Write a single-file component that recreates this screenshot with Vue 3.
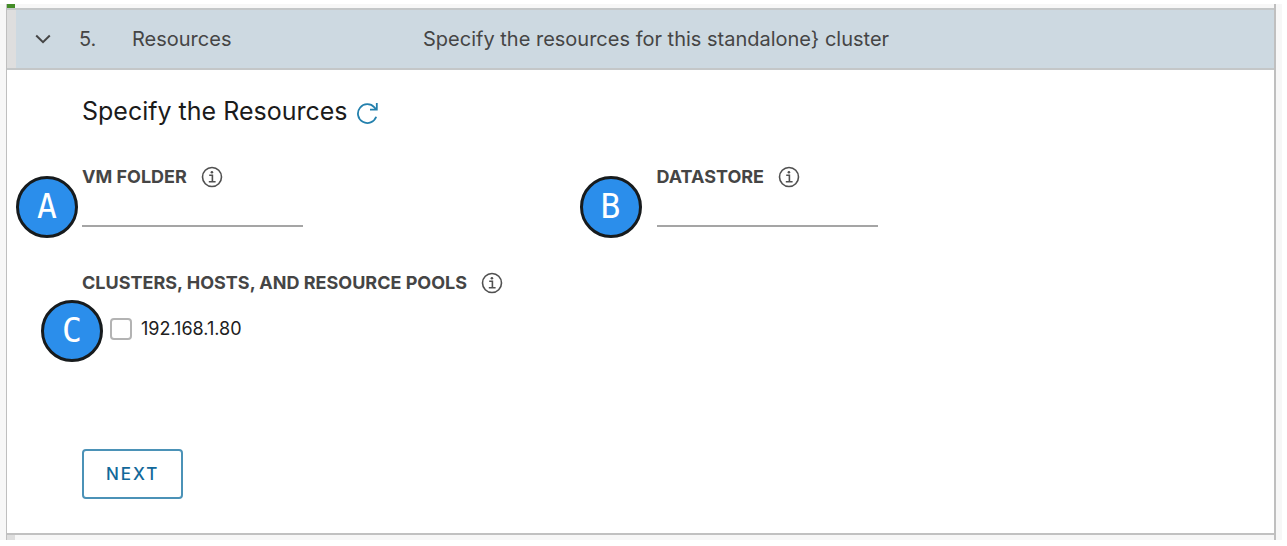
<script setup>
import { ref } from 'vue'

const folder = ref('')
const datastore = ref('')
const pools = ref([{ name: '192.168.1.80', checked: false }])
</script>

<template>
  <main class="page">
    <div class="stepper">
      <div class="previous"></div>

      <button class="step-header" type="button" aria-expanded="true">
        <svg class="chevron" viewBox="0 0 16 10" aria-hidden="true">
          <path d="M1.2 1.5 8 8.2 14.8 1.5" />
        </svg>
        <span class="number">5.</span>
        <span class="name">Resources</span>
        <span class="description">Specify the resources for this standalone} cluster</span>
      </button>

      <form class="step-body" @submit.prevent>
        <h1 class="title">
          Specify the Resources
          <button class="refresh" type="button" aria-label="Refresh">
            <svg viewBox="0 0 22 22" aria-hidden="true">
              <path d="M20.2 14.8A9.4 9.4 0 1 1 18.4 5.4L20 7.4" />
              <path d="M20.8 1V7.7H14" />
            </svg>
          </button>
        </h1>

        <div class="fields">
          <div class="field">
            <div class="label-row">
              <label for="folder">VM FOLDER</label>
              <svg class="info" viewBox="0 0 22 22" aria-hidden="true">
                <circle cx="11" cy="11" r="9.5" />
                <path d="M8.2 9.2H11.4V15.6M7.8 15.8H14.6" />
                <circle class="dot" cx="10.9" cy="6.2" r="1.3" />
              </svg>
            </div>
            <input id="folder" v-model="folder" class="text-input" type="text" />
            <span class="marker">A</span>
          </div>
          <div class="field">
            <div class="label-row">
              <label for="datastore">DATASTORE</label>
              <svg class="info" viewBox="0 0 22 22" aria-hidden="true">
                <circle cx="11" cy="11" r="9.5" />
                <path d="M8.2 9.2H11.4V15.6M7.8 15.8H14.6" />
                <circle class="dot" cx="10.9" cy="6.2" r="1.3" />
              </svg>
            </div>
            <input id="datastore" v-model="datastore" class="text-input" type="text" />
            <span class="marker wide">B</span>
          </div>
        </div>

        <div class="pools" role="group" aria-labelledby="pools-label">
          <div class="label-row">
            <span id="pools-label">CLUSTERS, HOSTS, AND RESOURCE POOLS</span>
            <svg class="info" viewBox="0 0 22 22" aria-hidden="true">
              <circle cx="11" cy="11" r="9.5" />
              <path d="M8.2 9.2H11.4V15.6M7.8 15.8H14.6" />
              <circle class="dot" cx="10.9" cy="6.2" r="1.3" />
            </svg>
          </div>
          <div v-for="pool in pools" :key="pool.name" class="pool">
            <input :id="pool.name" v-model="pool.checked" class="checkbox" type="checkbox" />
            <label :for="pool.name">{{ pool.name }}</label>
            <span class="marker pool-marker">C</span>
          </div>
        </div>

        <button class="next" type="submit">NEXT</button>
      </form>

      <div class="following"></div>
    </div>
  </main>
</template>

<style>
body {
  background: #fff;
}
</style>

<style scoped>
.page,
.page * {
  box-sizing: border-box;
}

.page {
  margin: 4px 5px 6px 0;
  padding: 0 6px;
  background: #f7f7f7;
  color: #454545;
  font-family: Inter, "Liberation Sans", sans-serif;
}

.stepper {
  border: solid #bfbfbf;
  border-width: 0 2px 0 1px;
}

.previous {
  height: 4px;
  border-left: 8px solid #438c27;
}

.step-header {
  display: flex;
  align-items: center;
  width: 100%;
  height: 62px;
  margin: 0;
  padding: 0 0 0 20px;
  border: solid #c4c7c8;
  border-width: 2px 0;
  background: linear-gradient(to right, #dedede 9px, #cdd9e1 9px);
  color: #454545;
  font: 400 20px/24px Inter, "Liberation Sans", sans-serif;
  text-align: left;
}

.chevron {
  width: 16px;
  height: 10px;
  margin: 0 28px 0 8px;
  fill: none;
  stroke: #454545;
  stroke-width: 2;
}

.number {
  width: 53px;
}

.name {
  width: 291px;
}

.step-body {
  padding: 23px 75px 34px;
  background: #fff;
}

.title {
  display: flex;
  align-items: center;
  gap: 9px;
  margin: 0;
  color: #1b1b1b;
  font-size: 25px;
  font-weight: 400;
  line-height: 36px;
}

.refresh {
  width: 22px;
  height: 22px;
  margin-top: 4px;
  padding: 0;
  border: 0;
  background: none;
}

.refresh svg {
  display: block;
  fill: none;
  stroke: #2380ad;
  stroke-width: 1.8;
}

.fields {
  display: grid;
  grid-template-columns: 1fr 1fr;
  gap: 32px;
  margin-top: 36px;
}

.field {
  position: relative;
}

.label-row {
  display: flex;
  align-items: center;
  gap: 14px;
  font-size: 18px;
  font-weight: 700;
  line-height: 24px;
}

.info {
  width: 22px;
  height: 22px;
  fill: none;
  stroke: #505050;
  stroke-width: 1.6;
}

.info .dot {
  fill: #505050;
  stroke: none;
}

.text-input {
  display: block;
  width: 221px;
  height: 38px;
  padding: 0 8px;
  border: 0;
  border-bottom: 2px solid #a5a5a5;
  outline: 0;
  background: none;
  font: inherit;
}

.marker {
  position: absolute;
  top: 11px;
  left: -66px;
  display: flex;
  align-items: center;
  justify-content: center;
  width: 62px;
  height: 62px;
  border: 3px solid #171b1d;
  border-radius: 50%;
  background: #2b8eeb;
  color: #fff;
  font: 400 33px/40px "DejaVu Sans Mono", monospace;
}

.marker.wide {
  left: -77px;
}

.pools {
  margin-top: 44px;
}

.pool {
  position: relative;
  display: flex;
  align-items: center;
  gap: 9px;
  margin-top: 22px;
  padding-left: 28px;
  color: #202020;
  font-size: 18px;
  line-height: 24px;
}

.checkbox {
  width: 22px;
  height: 22px;
  margin: 0;
  border: 2px solid #b3b3b3;
  border-radius: 4px;
  background: #fff;
  appearance: none;
}

.checkbox:checked {
  background: #2380ad;
}

.pool-marker {
  top: -17px;
  left: -41px;
}

.next {
  display: block;
  height: 50px;
  margin-top: 108px;
  padding: 0 22px;
  border: 2px solid #4b92b7;
  border-radius: 4px;
  background: #fff;
  color: #12689a;
  font: 500 17px/24px Inter, "Liberation Sans", sans-serif;
  letter-spacing: 2px;
}

.following {
  height: 7px;
  border-top: 2px solid #c1c1c1;
  background: linear-gradient(to right, #dedede 8px, transparent 8px);
}
</style>
